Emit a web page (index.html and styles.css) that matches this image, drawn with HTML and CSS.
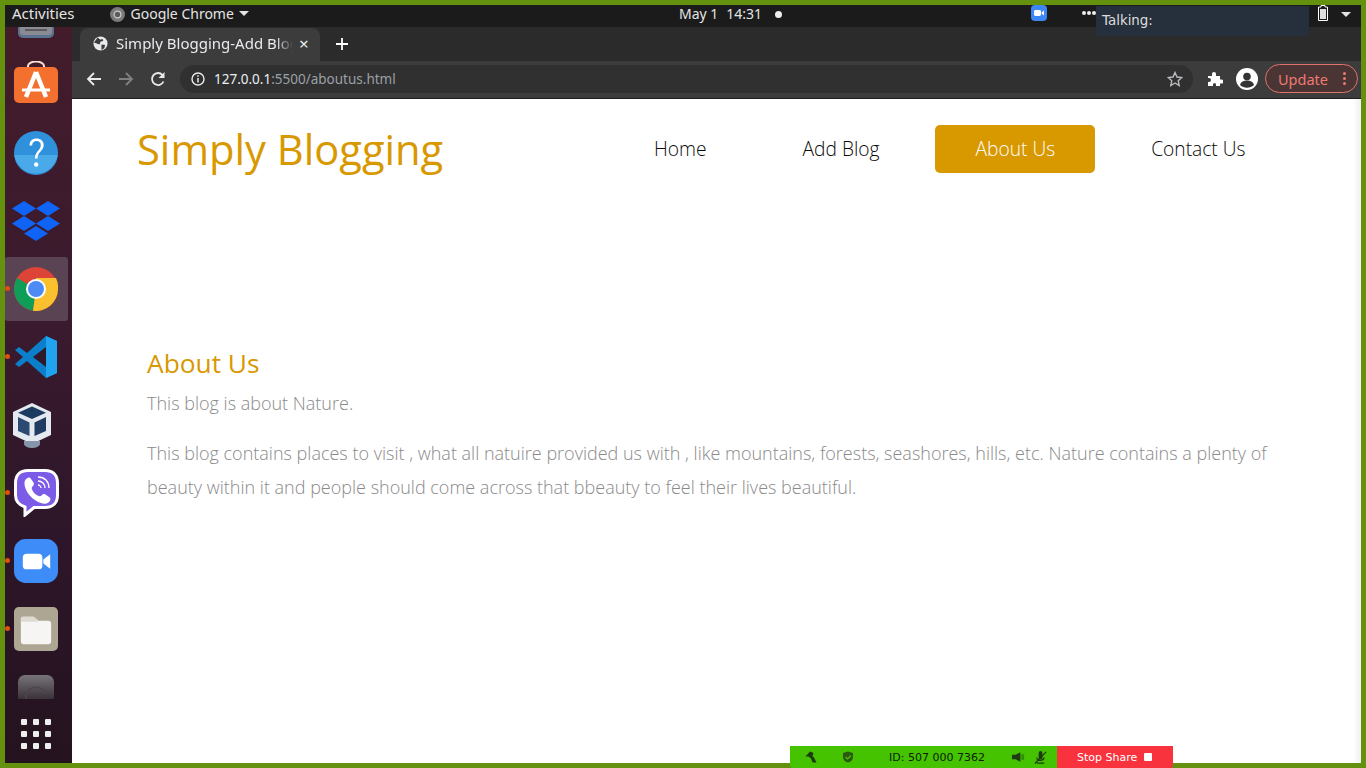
FILE: index.html
```html
<!DOCTYPE html>
<html lang="en">
<head>
<meta charset="utf-8">
<title>Simply Blogging-About Us</title>
<link rel="stylesheet" href="styles.css">
</head>
<body>
<div class="frame">
  <header class="topbar">
    <div class="tb-left">
      <span class="tb-activities">Activities</span>
      <span class="tb-app">
        <svg class="tb-chrome" viewBox="0 0 16 16"><circle cx="8" cy="8" r="8" fill="#7a7a7a"/><circle cx="8" cy="8" r="3.600" fill="#5c5c5c" stroke="#c9c9c9" stroke-width="1.400"/></svg>
        Google Chrome
        <i class="caret"></i>
      </span>
    </div>
    <div class="tb-clock"><span>May 1</span><span>14:31</span><i class="dot"></i></div>
    <div class="tb-right">
      <svg class="tb-zoom" viewBox="0 0 16 16"><rect width="16" height="16" rx="4" fill="#3d86f6"/><rect x="3" y="5" width="7" height="6" rx="1.400" fill="#fff"/><path d="M10.600 7.400 13 5.600v4.800l-2.400-1.800z" fill="#fff"/></svg>
      <svg class="tb-dots" viewBox="0 0 14 4"><circle cx="2" cy="2" r="2" fill="#eee"/><circle cx="7" cy="2" r="2" fill="#eee"/><circle cx="12" cy="2" r="2" fill="#eee"/></svg>
      <svg class="tb-battery" viewBox="0 0 12 16"><path d="M4 .5h4v1.500h2.500v13.500h-9V2H4z" fill="none" stroke="#fff"/><rect x="3" y="4" width="6" height="10" fill="#ddd"/></svg>
      <i class="caret"></i>
    </div>
  </header>
  <div class="desktop">
    <nav class="dock">
      <div class="dock-clip"><svg class="d-top" viewBox="0 0 36 12"><path d="M0 0h36v6a5 5 0 0 1-5 5H5a5 5 0 0 1-5-5z" fill="#5a7391"/><path d="M2 0h32v5a3 3 0 0 1-3 3H5a3 3 0 0 1-3-3z" fill="#8b8c91"/><rect x="7" y="2" width="22" height="2" fill="#5c5c60"/></svg></div>
      <div class="dock-item"><svg class="ico bag" viewBox="0 0 44 42"><path d="M14 7V5a8 4.500 0 0 1 16 0v2" fill="none" stroke="#f7e3d0" stroke-width="2"/><rect y="6" width="44" height="36" rx="5" fill="#f3702f"/><path d="M22 11 12 36M22 11l10 25" stroke="#fff" stroke-width="4.500" fill="none"/><path d="M8 29h28" stroke="#fff" stroke-width="3"/></svg></div>
      <div class="dock-item"><svg class="ico" viewBox="0 0 44 44"><circle cx="22" cy="22" r="22" fill="#2f90dc"/><path d="M.3 24a22 22 0 0 0 43.400 0z" fill="#4aa9e8"/><path d="M15.500 14.500c0-4.500 3-7 7-7s7.200 2.500 7.200 6.500c0 6-6.200 6.500-6.200 13.500h-2.500c0-7.500 5.800-8 5.800-13.500 0-2.500-1.900-4-4.300-4s-4.300 1.500-4.400 4.500z" fill="#fff"/><circle cx="22.200" cy="33.500" r="2.200" fill="#fff"/></svg></div>
      <div class="dock-item"><svg class="ico dropbox" viewBox="0 0 48 40"><g fill="#0f63f5"><path d="M12 0l12 7.500L12 15 0 7.500z"/><path d="M36 0l12 7.500L36 15 24 7.500z"/><path d="M12 15l12 7.500L12 30 0 22.500z"/><path d="M36 15l12 7.500L36 30 24 22.500z"/><path d="M24 25l12 7.500L24 40l-12-7.500z"/></g></svg></div>
      <div class="dock-item active"><i class="run"></i><svg class="ico" viewBox="0 0 44 44"><circle cx="22" cy="22" r="22" fill="#db4437"/><path d="M22 22 3 11A22 22 0 0 0 19 43.800z" fill="#0f9d58"/><path d="M22 22h22a22 22 0 0 1-25 21.800z" fill="#fbc02d"/><path d="M22 11h20a22 22 0 0 1 2 11H22z" fill="#fbc02d"/><circle cx="22" cy="22" r="10" fill="#fff"/><circle cx="22" cy="22" r="8" fill="#4c8bf5"/></svg></div>
      <div class="dock-item"><i class="run"></i><svg class="ico vscode" viewBox="0 0 42 42"><path d="M31 0 42 5v32L31 42 12 25l-8 6-4-3 8-7-8-7 4-3 8 6z" fill="#0b7fc9"/><path d="M31 0 42 5v32L31 42z" fill="#20a4f0"/><path d="M31 11 18 21l13 10z" fill="#2f1a2c"/></svg></div>
      <div class="dock-item"><svg class="ico vbox" viewBox="0 0 38 45"><path d="M19 0 38 9v23L19 41 0 32V9z" fill="#e4e8ef"/><path d="M19 3.500 33 9.800 19 16 5 9.800z" fill="#1c3a60"/><path d="M5 14 16.500 19.500V33L5 28z" fill="#2b4a72"/><path d="M33 14 21.500 19.500V33L33 28z" fill="#203c62"/><path d="M11 38h16v3a8 4 0 0 1-16 0z" fill="#8795ab"/></svg></div>
      <div class="dock-item"><i class="run"></i><svg class="ico viber" viewBox="0 0 45 48"><path d="M14 1.500h17c8 0 12.500 4.500 12.500 12.500v12c0 8-4.500 12.500-12.500 12.500H20L11 46v-8C5 36 1.500 32 1.500 26V14C1.500 6 6 1.500 14 1.500z" fill="#7c5ce6" stroke="#fff" stroke-width="3"/><path d="M12 10c2-2 4-2 5 0l2.500 3.500c1 2 0 3-1 4s-1 2 0 4 3 4 5 5 3 1 4 0 2-2 4-1l3.500 2.500c2 1 2 3 0 5-3 3-7 2-12.500-1S13.500 24.500 11.500 19.500C10 15 10 12 12 10z" fill="#fff"/><path d="M24 8c6.500 0 11 4.500 11 11M24 12c4 0 7 3 7 7M24 16c1.500 0 3 1.500 3 3" stroke="#fff" fill="none" stroke-width="1.300"/></svg></div>
      <div class="dock-item"><i class="run"></i><svg class="ico" viewBox="0 0 45 45"><rect width="45" height="45" rx="12" fill="#3e8cf7"/><rect x="9" y="15" width="20" height="16" rx="4" fill="#fff"/><path d="M30 21l7-5.500v15L30 25z" fill="#fff"/></svg></div>
      <div class="dock-item"><i class="run"></i><svg class="ico" viewBox="0 0 45 45"><rect width="45" height="45" rx="5" fill="#aca692"/><path d="M7 12a2 2 0 0 1 2-2h11l5 4h10a3 3 0 0 1 3 3v18a3 3 0 0 1-3 3H10a3 3 0 0 1-3-3z" fill="#f6f5f3"/><path d="M7 15v-3a2 2 0 0 1 2-2h11l5 5z" fill="#dedad2"/></svg></div>
      <div class="dock-item faded"><svg class="ico-disc" viewBox="0 0 36 24"><defs><linearGradient id="discfade" x1="0" y1="0" x2="0" y2="1"><stop offset="0" stop-color="#77757a"/><stop offset="1" stop-color="#3c3239"/></linearGradient></defs><path d="M0 24V7a7 7 0 0 1 7-7h22a7 7 0 0 1 7 7v17z" fill="url(#discfade)"/><path d="M8 24a10 9 0 0 1 20 -5" fill="none" stroke="#4a474b" stroke-width="1.500"/></svg></div>
      <div class="dock-grid"><i></i><i></i><i></i><i></i><i></i><i></i><i></i><i></i><i></i></div>
    </nav>
    <div class="browser">
      <div class="tabstrip">
        <div class="tab">
          <svg class="globe" viewBox="0 0 16 16"><circle cx="8" cy="8" r="7.500" fill="#e8eaed"/><path d="M5 1.500 8 4l2-1 1 2-3 1-1 3-3-1-3-1zM9 9l4 .5-1 3.500-3 2z" fill="#3b3b3b"/></svg>
          <span class="tab-title">Simply Blogging-Add Blog</span>
          <span class="tab-close">×</span>
        </div>
        <svg class="tab-new" viewBox="0 0 12 12"><path d="M6 0v12M0 6h12" stroke="#fff" stroke-width="1.800"/></svg>
      </div>
      <div class="toolbar">
        <svg class="tool" viewBox="0 0 16 16"><path d="M15 8H2M8 2 2 8l6 6" fill="none" stroke="#e8eaed" stroke-width="1.800"/></svg>
        <svg class="tool" viewBox="0 0 16 16"><path d="M1 8h13M8 2l6 6-6 6" fill="none" stroke="#7e8082" stroke-width="1.800"/></svg>
        <svg class="tool" viewBox="0 0 16 16"><path d="M13.500 10.500A6 6 0 1 1 12.500 4" fill="none" stroke="#e8eaed" stroke-width="1.800"/><path d="M14.500 1v6h-6z" fill="#e8eaed"/></svg>
        <div class="omnibox">
          <svg class="info" viewBox="0 0 14 14"><circle cx="7" cy="7" r="6" fill="none" stroke="#e8eaed" stroke-width="1.400"/><path d="M7 6v4.500M7 3.300v1.500" stroke="#e8eaed" stroke-width="1.500"/></svg>
          <span class="url"><b>127.0.0.1</b>:5500/aboutus.html</span>
          <svg class="star" viewBox="0 0 16 16"><path d="m8 1.500 2 4.500 4.800.5-3.600 3.200 1 4.800L8 12l-4.200 2.500 1-4.800L1.200 6.500 6 6z" fill="none" stroke="#b9bbbe" stroke-width="1.400"/></svg>
        </div>
        <svg class="puzzle" viewBox="0 0 16 16"><path d="M1 5h4V3a2 2 0 0 1 4 0v2h4v3.500h1.500a2 2 0 0 1 0 4H13V15H9v-1.500a1.500 1.500 0 0 0-3 0V15H1v-4h1a2 2 0 0 0 0-4H1z" fill="#fff"/></svg>
        <svg class="avatar" viewBox="0 0 22 22"><circle cx="11" cy="11" r="11" fill="#fff"/><circle cx="11" cy="8.500" r="3.800" fill="#333"/><path d="M4 17c1-3.500 4-4.500 7-4.500s6 1 7 4.500c-4 3.500-10 3.500-14 0z" fill="#333"/></svg>
        <div class="update"><span>Update</span><i class="kebab"><u></u><u></u><u></u></i></div>
      </div>
      <main class="page">
        <header class="site-head">
          <h1 class="brand">Simply Blogging</h1>
          <ul class="menu">
            <li><a>Home</a></li>
            <li><a>Add Blog</a></li>
            <li class="current"><a>About Us</a></li>
            <li><a>Contact Us</a></li>
          </ul>
        </header>
        <section class="about">
          <h2>About Us</h2>
          <p class="lead">This blog is about Nature.</p>
          <p class="body">This blog contains places to visit , what all natuire provided us with , like mountains, forests, seashores, hills, etc. Nature contains a plenty of beauty within it and people should come across that bbeauty to feel their lives beautiful.</p>
        </section>
      </main>
    </div>
  </div>
</div>
<div class="talking">Talking:</div>
<div class="zoombar">
  <div class="zb-green">
    <svg class="zb-i1" viewBox="0 0 12 12"><path d="M5 .5 .5 5.500H3.500L6 7.500 7.500 11.500H11.500L9 6.500 7.500 5 8.500 2z" fill="#1d3a10"/></svg>
    <svg class="zb-i2" viewBox="0 0 12 12"><path d="M6 .5 11 2v4c0 3-2 4.500-5 5.500C3 10.500 1 9 1 6V2z" fill="#2a5a10"/><path d="m3.500 6 2 2L9 4.500" stroke="#4cc400" fill="none" stroke-width="1.200"/></svg>
    <span class="zb-id">ID: 507 000 7362</span>
    <svg class="zb-i3" viewBox="0 0 14 12"><path d="M0 3.500h4L9 1v10L4 8.500H0z" fill="#1d3a10"/><rect x="10" y="3" width="3" height="6" fill="#2f8f05"/></svg>
    <svg class="zb-i4" viewBox="0 0 14 14"><path d="M5 2a2 2 0 0 1 4 0v5a2 2 0 0 1-4 0z" fill="#1d3a10"/><path d="M3 7c0 4 7 4 8 0M3 13h8M1 13.500 13 1" stroke="#1d3a10" fill="none" stroke-width="1.300"/></svg>
  </div>
  <div class="zb-stop"><span>Stop Share</span><i></i></div>
</div>
</body>
</html>
```
FILE: styles.css
```css
* { box-sizing: border-box; }
html, body { margin: 0; padding: 0; height: 100%; overflow: hidden; }
body { position: relative; background: #64920f; font-family: "Open Sans", sans-serif; }
.frame { width: 1366px; height: 768px; border: 5px solid #64920f; display: flex; flex-direction: column; }
.topbar { height: 22px; background: #1b1b1b; color: #e4e4e4; display: flex; align-items: center; position: relative; font: 14px "Noto Sans", sans-serif; flex: none; padding-bottom: 6px; }
.tb-left { display: flex; align-items: center; }
.tb-activities { margin-left: 7px; font-size: 15px; }
.tb-app { display: flex; align-items: center; margin-left: 35px; }
.tb-chrome { width: 15px; height: 15px; margin: 2px 6px 0 0; }
.caret { display: inline-block; border: 5px solid transparent; border-top: 5px solid #e4e4e4; border-bottom: 0; margin-left: 5px; width: 0; height: 0; }
.tb-clock { position: absolute; left: 674px; top: 0; height: 16px; display: flex; align-items: center; gap: 8px; }
.dot { width: 7px; height: 7px; border-radius: 50%; background: #eee; margin: 2px 0 0 5px; }
.tb-zoom { width: 16px; height: 16px; position: absolute; left: 1026px; top: 0; }
.tb-dots { position: absolute; left: 1077px; top: 6px; width: 14px; height: 4px; }
.tb-battery { width: 12px; height: 16px; position: absolute; left: 1312px; top: 0; }
.tb-right .caret { position: absolute; left: 1336px; top: 7px; margin: 0; }
.desktop { flex: 1; display: flex; min-height: 0; }
.dock { width: 67px; flex: none; background: linear-gradient(#421c2a, #3a1a2e 40%, #2d1629 70%, #24131f); display: flex; flex-direction: column; position: relative; overflow: hidden; }
.dock-clip { height: 12px; width: 100%; display: flex; justify-content: center; padding-right: 5px; flex: none; }
.d-top { width: 36px; height: 12px; }
.dock-item { width: 63px; height: 64px; flex: none; display: flex; align-items: center; justify-content: center; position: relative; border-radius: 3px; margin-top: 4px; padding-right: 1px; }
.dock-clip + .dock-item { margin-top: 14px; }
.dock-item.active { background: #5a4353; }
.ico { width: 44px; height: 44px; flex: none; }
.ico.bag { height: 42px; margin-top: -6px; }
.ico.dropbox { height: 40px; width: 48px; }
.ico.vscode { width: 42px; height: 42px; }
.ico.vbox { height: 45px; width: 38px; margin-right: 8px; }
.ico.viber { width: 45px; height: 48px; }
.dock-item.faded { height: 24px; margin-top: 14px; }
.ico-disc { width: 36px; height: 24px; }
.run { position: absolute; left: 0; top: 29px; width: 5px; height: 5px; border-radius: 50%; background: #e0500f; }
.dock-grid { display: grid; grid-template-columns: repeat(3, 6px); grid-auto-rows: 6px; gap: 6px; margin: 20px 0 0 16px; flex: none; }
.dock-grid i { background: #eeeeee; border-radius: 1px; }
.browser { flex: 1; min-width: 0; display: flex; flex-direction: column; background: #fff; }
.tabstrip { height: 34px; flex: none; background: #2b2b2b; display: flex; align-items: flex-end; padding-left: 8px; }
.tab { width: 240px; height: 33px; background: #3c3c3c; border-radius: 8px 8px 0 0; display: flex; align-items: center; padding: 0 0 2px 13px; color: #e8eaed; font: 15px "Noto Sans", sans-serif; position: relative; }
.globe { width: 15px; height: 15px; flex: none; margin-right: 8px; }
.tab-title { width: 177px; flex: none; margin-top: -2px; overflow: hidden; white-space: nowrap; -webkit-mask-image: linear-gradient(90deg, #000 160px, transparent); mask-image: linear-gradient(90deg, #000 160px, transparent); }
.tab-close { margin-left: 6px; font-size: 17px; line-height: 1; }
.tab-new { width: 12px; height: 12px; margin: 0 0 11px 16px; }
.toolbar { height: 38px; flex: none; background: #3c3c3c; border-bottom: 1px solid #1f1f1f; display: flex; align-items: center; padding: 0 0 2px 14px; }
.tool { width: 16px; height: 16px; flex: none; margin-right: 16px; }
.omnibox { width: 1013px; height: 28px; margin-left: -2px; border-radius: 14px; background: #303030; display: flex; align-items: center; padding-left: 11px; font: 13.5px "Noto Sans", sans-serif; color: #9aa0a6; flex: none; }
.info { width: 14px; height: 14px; margin-right: 9px; flex: none; }
.url b { font-weight: 400; color: #eceff1; }
.star { width: 16px; height: 16px; margin-left: auto; margin-right: 10px; }
.puzzle { width: 16px; height: 16px; margin-left: 14px; flex: none; }
.avatar { width: 22px; height: 22px; margin-left: 13px; flex: none; }
.update { margin-left: 7px; width: 93px; height: 29px; border: 1px solid #e0736c; border-radius: 15px; background: #4a3534; color: #ec7a72; font: 14.5px "Noto Sans", sans-serif; display: flex; align-items: center; padding-left: 12px; flex: none; }
.kebab { margin-left: 15px; display: flex; flex-direction: column; gap: 2px; }
.kebab u { display: block; width: 3px; height: 3px; border-radius: 50%; background: #ec7a72; }
.page { flex: 1; min-height: 0; background: linear-gradient(90deg, #fff 1281px, #f0f0f0); }
.site-head { display: flex; height: 98px; padding: 26px 0 0 65px; align-items: flex-start; }
.brand { margin: 0; font-size: 41.7px; font-weight: 400; color: #d89800; line-height: 48px; width: 477px; flex: none; }
.menu { list-style: none; margin: 0; padding: 0; display: flex; gap: 16px; font-size: 19.2px; font-weight: 300; color: #0a0a0a; }
.menu li { height: 48px; padding: 0 40px 2px; border-radius: 5px; display: flex; align-items: center; }
.menu .current { background: #d89800; color: #fff; }
.about { margin: 148px 0 0 75px; width: 1130px; }
.about h2 { margin: 0; font-size: 26.3px; font-weight: 400; color: #d89800; line-height: 36px; }
.lead, .body { font-size: 18px; font-weight: 300; color: #8a8a8a; margin: 0; line-height: 34px; }
.lead { margin-top: 5px; }
.body { margin-top: 16px; }
.talking { position: absolute; left: 1096px; top: 6px; width: 213px; height: 30px; background: #26303c; color: #dedede; font: 13.4px/29px "DejaVu Sans", sans-serif; padding-left: 6px; }
.zoombar { position: absolute; left: 790px; top: 746px; width: 383px; height: 22px; display: flex; font: 11px "DejaVu Sans", sans-serif; border-radius: 0 0 3px 3px; overflow: hidden; }
.zb-green { width: 267px; background: #45c300; position: relative; display: flex; align-items: center; color: #0c1c06; }
.zb-green svg { position: absolute; top: 5px; width: 12px; height: 12px; }
.zb-green .zb-i3 { width: 13px; }
.zb-green .zb-i4 { width: 13px; height: 13px; }
.zb-i1 { left: 15px; } .zb-i2 { left: 52px; } .zb-i3 { left: 222px; } .zb-i4 { left: 244px; }
.zb-id { margin-left: 99px; }
.zb-stop { flex: 1; background: #f8333e; color: #fff; display: flex; align-items: center; padding-left: 20px; }
.zb-stop i { width: 8px; height: 8px; background: #fff; border-radius: 1px; margin-left: 7px; }
```
